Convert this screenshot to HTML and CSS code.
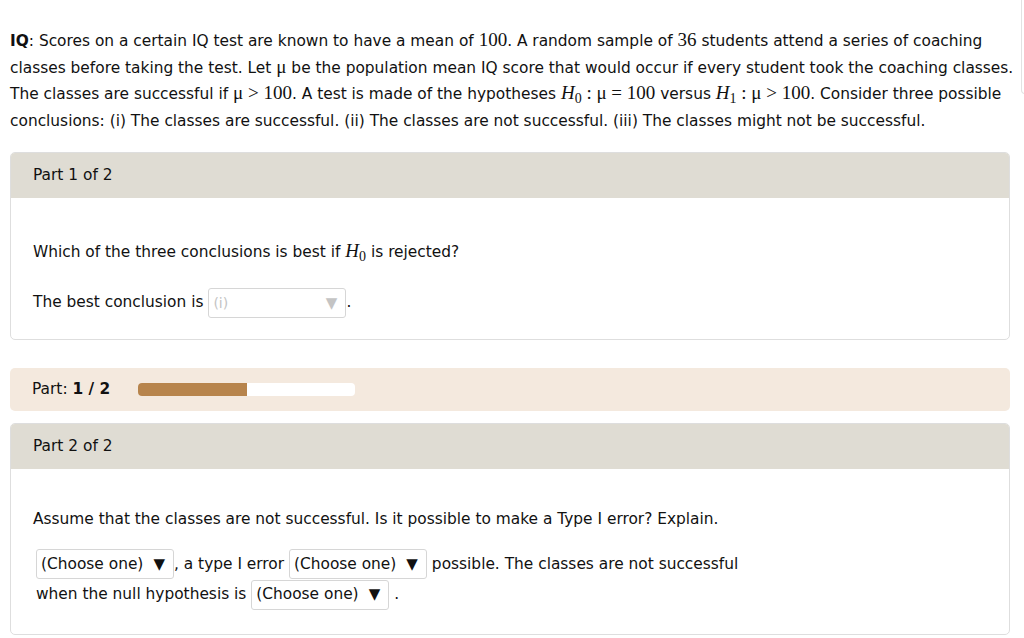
FILE: index.html
```html
<!DOCTYPE html>
<html>
<head>
<meta charset="utf-8">
<link rel="stylesheet" href="styles.css">
</head>
<body>
<div class="edge"></div>
<p class="intro"><b class="iq">IQ</b>: Scores on a certain IQ test are known to have a mean of <span class="m">100</span>. A random sample of <span class="m">36</span> students attend a series of coaching classes before taking the test. Let <span class="m">μ</span> be the population mean IQ score that would occur if every student took the coaching classes. The classes are successful if <span class="m">μ &gt; 100</span>. A test is made of the hypotheses <span class="m"><i>H</i><sub>0</sub> : μ = 100</span> versus <span class="m"><i>H</i><sub>1</sub> : μ &gt; 100</span>. Consider three possible conclusions: (i) The classes are successful. (ii) The classes are not successful. (iii) The classes might not be successful.</p>

<section class="card card-1">
  <div class="card-head">Part 1 of 2</div>
  <div class="card-body body-1">
    <p class="q">Which of the three conclusions is best if <span class="m"><i>H</i><sub>0</sub></span> is rejected?</p>
    <p class="ans1">The best conclusion is <span class="sel sel-dis"><span class="sel-txt">(i)</span><span class="tri">▼</span></span>.</p>
  </div>
</section>

<div class="progress">
  <span class="plabel">Part: <b>1 / 2</b></span>
  <span class="bar"><span class="fill" style="width:50%"></span></span>
</div>

<section class="card card-2">
  <div class="card-head">Part 2 of 2</div>
  <div class="card-body body-2">
    <p class="q">Assume that the classes are not successful. Is it possible to make a Type I error? Explain.</p>
    <p class="ans2"><span class="sel sel-a">(Choose one)<span class="tri">▼</span></span>, a type I error <span class="sel sel-b">(Choose one)<span class="tri">▼</span></span> possible. The classes are not successful<br>when the null hypothesis is <span class="sel sel-c">(Choose one)<span class="tri">▼</span></span> .</p>
  </div>
</section>
</body>
</html>
```
FILE: styles.css
```css
html, body {
  margin: 0;
  padding: 0;
  background: #ffffff;
}
body {
  font-family: "DejaVu Sans", Verdana, sans-serif;
  font-size: 15.4px;
  color: #111;
  padding: 0 14px 0 10px;
  position: relative;
}
.edge {
  position: absolute;
  left: 1021px;
  top: 0;
  width: 20px;
  height: 93px;
  border: 1px solid #e2e2e2;
  border-top: none;
  border-radius: 0 0 0 4px;
}
.intro {
  margin: 0;
  padding-top: 28px;
  line-height: 26.5px;
  width: 1004px;
}
.m {
  font-family: "Liberation Serif", "Times New Roman", serif;
  font-size: 19px;
  line-height: 1;
}
.m sub {
  font-size: 14px;
  line-height: 0;
  vertical-align: -4px;
}
.card {
  width: 1000px;
  border: 1px solid #dedede;
  border-radius: 5px;
  overflow: hidden;
  box-sizing: border-box;
}
.card-1 {
  margin-top: 18px;
}
.card-head {
  background: #dfdcd3;
  height: 45px;
  line-height: 45px;
  padding-left: 22px;
}
.card-body {
  padding-left: 22px;
}
.q {
  margin: 0;
  line-height: 20px;
}
.body-1 {
  padding-top: 43px;
  padding-bottom: 21px;
}
.ans1 {
  margin: 25px 0 0 0;
  line-height: 30px;
}
.sel {
  display: inline-flex;
  align-items: center;
  box-sizing: border-box;
  height: 30px;
  border: 1px solid #d6d6d6;
  border-radius: 3px;
  vertical-align: middle;
  padding-left: 4px;
  background: #fff;
}
.sel-dis {
  width: 138px;
  color: #c4c4c4;
  font-size: 14px;
  justify-content: space-between;
  padding-right: 8px;
}
.sel-dis .tri {
  color: #c4c4c4;
  font-size: 15px;
}
.tri {
  font-size: 15px;
  margin-left: 10px;
}
.progress {
  width: 1000px;
  box-sizing: border-box;
  margin-top: 28px;
  height: 43px;
  background: #f4e9de;
  border-radius: 5px;
  display: flex;
  align-items: center;
  padding-left: 22px;
}
.plabel {
  width: 106px;
}
.bar {
  display: block;
  width: 217px;
  height: 13px;
  background: #fff;
  border-radius: 4px;
  overflow: hidden;
}
.fill {
  display: block;
  height: 100%;
  background: #b7844c;
}
.card-2 {
  margin-top: 12px;
}
.body-2 {
  padding-top: 40px;
  padding-bottom: 24px;
}
.ans2 {
  margin: 20px 0 0 3px;
  line-height: 30.5px;
}
.sel-a, .sel-b, .sel-c {
  width: 138px;
  padding-right: 4px;
}
```
